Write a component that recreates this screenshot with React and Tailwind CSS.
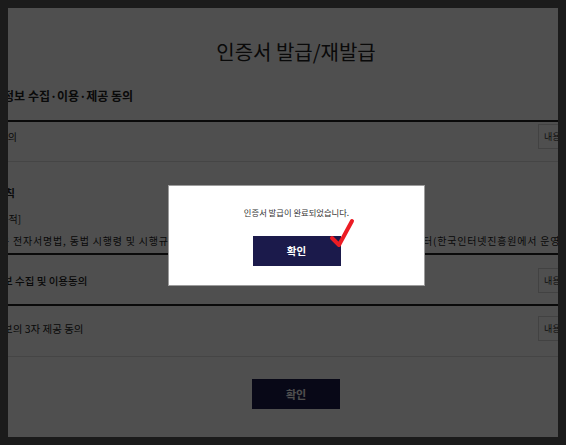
import React from "react";

const font = { fontFamily: '"Noto Sans CJK KR", "Noto Sans", sans-serif' };

const ViewButton = () => (
    <button className="h-[25px] w-[52px] shrink-0 border border-[#d5d5d5] bg-white pl-[5px] text-left text-[9px] text-[#333]">
        내용보기
    </button>
);

const App = () => {
    return (
        <div className="h-[445px] w-[566px] bg-[#1b1b1b] pt-[8px] pl-[8px]" style={font}>
            <div className="relative h-[429px] w-[550px] overflow-hidden bg-white">
                {/* page behind the dialog */}
                <div className="-ml-[16px] w-[608px] text-[#222]">
                    <h1 className="pt-[30px] text-center text-[20px] font-normal leading-[28px]">인증서 발급/재발급</h1>

                    <div className="border-b-2 border-[#222] pt-[21px] pb-[15px]">
                        <h2 className="-ml-[11px] whitespace-nowrap text-[12px] font-bold leading-[18px]">개인정보 수집·이용·제공 동의</h2>
                    </div>

                    <div className="h-[40px] border-b border-[#dedede] pt-[2px] pr-[10px]">
                        <div className="flex h-[25px] items-center justify-between">
                            <span className="-ml-[14px] whitespace-nowrap text-[10px]">전체 동의</span>
                            <ViewButton />
                        </div>
                    </div>

                    <div className="border-b-2 border-[#222] pt-[23px] pb-[5px]">
                        <p className="-ml-[35px] whitespace-nowrap text-[10.5px] font-bold leading-[16px]">인증업무준칙</p>
                        <p className="mt-[10px] ml-[4px] whitespace-nowrap text-[10px] leading-[16px]">[목적]</p>
                        <div className="mt-[7px] -ml-[25px] flex whitespace-nowrap text-[10px] leading-[14px] tracking-[0.8px]">
                            <span className="w-[456px] shrink-0 overflow-hidden">
                                이 약관은 전자서명법, 동법 시행령 및 시행규칙에 따라 한국인터넷진흥원 전자서명인증센
                            </span>
                            <span>터(한국인터넷진흥원에서 운영하는 인증기관)</span>
                        </div>
                    </div>

                    <div className="border-b-2 border-[#222] pt-[13px] pb-[11px] pr-[10px]">
                        <div className="flex h-[25px] items-center justify-between">
                            <span className="-ml-[18px] whitespace-nowrap text-[10.5px] font-medium">개인정보 수집 및 이용동의</span>
                            <ViewButton />
                        </div>
                    </div>

                    <div className="border-b border-[#dedede] pt-[10px] pb-[15px] pr-[10px]">
                        <div className="flex h-[25px] items-center justify-between">
                            <span className="-ml-[18px] whitespace-nowrap text-[10.5px]">개인정보의 3자 제공 동의</span>
                            <ViewButton />
                        </div>
                    </div>

                    <div className="flex justify-center pt-[22px]">
                        <button className="h-[30px] w-[88px] bg-[#1b1a4b] text-[11px] font-bold text-white">확인</button>
                    </div>
                </div>

                <div className="absolute inset-0 bg-black/[0.69]" />

                {/* completion dialog */}
                <div className="absolute top-[177px] left-[160px] h-[101px] w-[257px] border border-[#9c9c9c] bg-white text-center">
                    <p className="pt-[19px] text-[8.3px] leading-[14px] text-[#333]">인증서 발급이 완료되었습니다.</p>
                    <button className="mt-[17px] h-[30px] w-[88px] bg-[#1b1a4b] text-[10.5px] font-bold text-white">확인</button>
                    <svg className="absolute top-[30px] left-[157px]" width="32" height="34" viewBox="0 0 32 34">
                        <path
                            d="M6 22 L13 29 L26 5"
                            fill="none"
                            stroke="#ec1c24"
                            strokeWidth="4"
                            strokeLinecap="round"
                            strokeLinejoin="round"
                        />
                    </svg>
                </div>
            </div>
        </div>
    );
};

export default App;
